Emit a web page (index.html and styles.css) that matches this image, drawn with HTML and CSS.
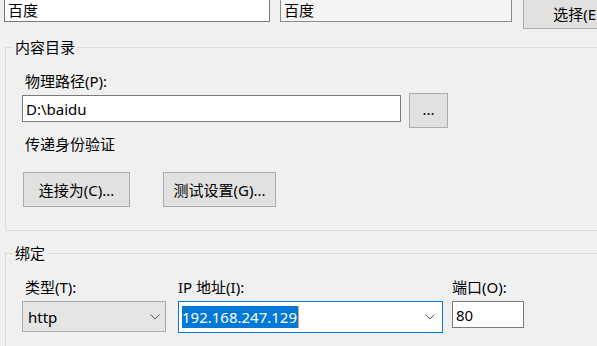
FILE: index.html
```html
<!DOCTYPE html>
<html lang="zh-CN">
<head>
<meta charset="utf-8">
<title>添加网站</title>
<link rel="stylesheet" href="styles.css">
</head>
<body>
<div class="top">
  <div class="tb tb1">百度</div>
  <div class="tb tb2">百度</div>
  <div class="btn btn-sel">选择(E)</div>
</div>

<fieldset class="group g1">
  <legend>内容目录</legend>
  <div class="inner">
    <div class="lbl">物理路径(P):</div>
    <div class="path-row">
      <div class="tb path">D:\baidu</div>
      <div class="btn dots">...</div>
    </div>
    <div class="lbl pass">传递身份验证</div>
    <div class="btn-row">
      <div class="btn b1">连接为(C)...</div>
      <div class="btn b2">测试设置(G)...</div>
    </div>
  </div>
</fieldset>

<fieldset class="group g2">
  <legend>绑定</legend>
  <div class="inner cols">
    <div class="col c1">
      <div class="lbl">类型(T):</div>
      <div class="select"><span>http</span><svg class="chev" width="10" height="6" viewBox="0 0 10 6"><polyline points="0.5,0.5 5,5 9.5,0.5" fill="none" stroke="#5a5a5a" stroke-width="1"/></svg></div>
    </div>
    <div class="col c2">
      <div class="lbl">IP 地址(I):</div>
      <div class="combo"><span class="sel">192.168.247.129</span><svg class="chev" width="10" height="6" viewBox="0 0 10 6"><polyline points="0.5,0.5 5,5 9.5,0.5" fill="none" stroke="#5a5a5a" stroke-width="1"/></svg></div>
    </div>
    <div class="col c3">
      <div class="lbl">端口(O):</div>
      <div class="tb port">80</div>
    </div>
  </div>
</fieldset>
</body>
</html>
```

FILE: styles.css
```css
html, body {
  margin: 0;
  padding: 0;
}
body {
  background: #f0f0f0;
  width: 597px;
  height: 346px;
  overflow: hidden;
  font-family: "Noto Sans", "Noto Sans CJK SC", sans-serif;
  font-size: 15px;
  color: #000;
}

.top {
  display: flex;
  align-items: flex-start;
  margin-top: -6px;
  height: 35px;
}
.top > * {
  flex: none;
}

.tb {
  box-sizing: border-box;
  border: 1px solid #7a7a7a;
  background: #fff;
  padding-left: 3px;
  display: flex;
  align-items: center;
  white-space: nowrap;
}

.tb1 {
  margin-left: 4px;
  margin-top: 2px;
  width: 266px;
  height: 26px;
}
.tb2 {
  margin-left: 10px;
  margin-top: 2px;
  width: 232px;
  height: 26px;
  background: #f4f4f4;
  border-color: #8c8c8c;
}

.btn {
  box-sizing: border-box;
  border: 1px solid #adadad;
  background: #e1e1e1;
  display: flex;
  align-items: center;
  justify-content: center;
  white-space: nowrap;
  flex: none;
}
.btn-sel {
  margin-left: 11px;
  width: 108px;
  height: 35px;
  padding-top: 4px;
}

.group {
  margin: 8px 0 0 5px;
  padding: 14px 0 23px 0;
  width: 700px;
  box-sizing: border-box;
  border: 1px solid #dcdcdc;
  min-width: 0;
}
.group legend {
  margin-left: 7px;
  padding: 0 2px;
  line-height: 20px;
}
.g2 {
  margin-top: 12px;
  height: 120px;
}

.inner {
  padding-left: 16px;
}

.lbl {
  line-height: 20px;
  padding-left: 3px;
  white-space: nowrap;
}

.path-row {
  display: flex;
  align-items: flex-start;
  margin-top: 2px;
}
.path {
  margin-top: 2px;
  width: 379px;
  height: 27px;
  flex: none;
}
.dots {
  margin-left: 8px;
  width: 39px;
  height: 35px;
  padding-bottom: 4px;
}

.pass {
  margin-top: 6px;
}

.btn-row {
  display: flex;
  margin-top: 18px;
}
.b1 {
  margin-left: 1px;
  width: 107px;
  height: 35px;
}
.b2 {
  margin-left: 33px;
  width: 113px;
  height: 35px;
}

.cols {
  display: flex;
  align-items: flex-start;
}
.col {
  flex: none;
}
.col .lbl {
  margin-bottom: 4px;
}
.c1 {
  width: 144px;
}
.c2 {
  margin-left: 12px;
  width: 265px;
}
.c2 .lbl, .c3 .lbl {
  padding-left: 0;
}
.c3 {
  margin-left: 9px;
  width: 72px;
}

.select {
  box-sizing: border-box;
  height: 31px;
  border: 1px solid #acacac;
  background: #e5e5e5;
  padding: 0 5px 0 5px;
  display: flex;
  align-items: center;
  justify-content: space-between;
}
.combo {
  box-sizing: border-box;
  height: 32px;
  border: 1px solid #0078d7;
  background: #fff;
  padding: 0 7px 0 3px;
  display: flex;
  align-items: center;
  justify-content: space-between;
}
.sel {
  background: #0078d7;
  color: #fff;
  line-height: 22px;
  padding-right: 1px;
  border-right: 1px solid #f0a060;
}
.chev {
  display: block;
  flex: none;
}
.port {
  margin-top: 1px;
  width: 72px;
  height: 27px;
}
```
